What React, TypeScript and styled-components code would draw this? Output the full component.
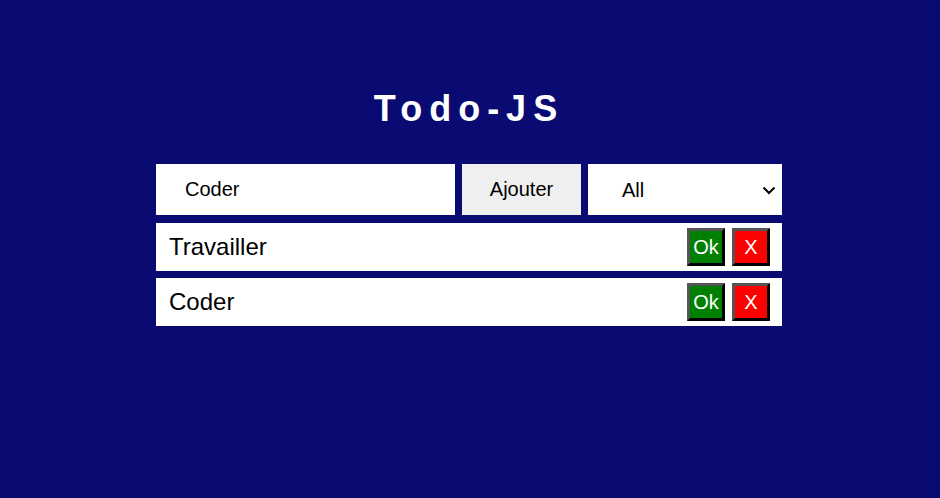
import React, { useState } from "react";
import styled, { createGlobalStyle } from "styled-components";

const GlobalStyle = createGlobalStyle`
  html, body {
    margin: 0;
    padding: 0;
    background: #0a0a73;
    font-family: "Liberation Sans", Arial, sans-serif;
  }
  * { box-sizing: border-box; }
`;

const Page = styled.div`
  min-height: 498px;
  padding: 88px 2px 0 0;
  display: flex;
  flex-direction: column;
  align-items: center;
`;

const Title = styled.h1`
  margin: 0 0 35px;
  font-size: 36px;
  line-height: 41px;
  font-weight: 700;
  color: #ffffff;
  letter-spacing: 7px;
  text-align: center;
`;

const Container = styled.div`
  width: 626px;
  display: flex;
  flex-direction: column;
  gap: 8px;
`;

const Form = styled.form`
  display: flex;
  gap: 7px;
  height: 51px;
`;

const TextInput = styled.input`
  width: 299px;
  height: 100%;
  border: none;
  outline: none;
  padding: 0 0 0 29px;
  font-family: inherit;
  font-size: 20px;
  color: #000;
  background: #fff;
`;

const AddButton = styled.button`
  width: 119px;
  height: 100%;
  border: none;
  background: #efefef;
  font-family: inherit;
  font-size: 20px;
  color: #000;
  padding: 0;
`;

const SelectWrap = styled.div`
  position: relative;
  width: 194px;
  height: 100%;
`;

const Filter = styled.select`
  appearance: none;
  -webkit-appearance: none;
  width: 100%;
  height: 100%;
  border: none;
  outline: none;
  border-radius: 0;
  background: #fff;
  font-family: inherit;
  font-size: 20px;
  color: #000;
  padding: 0 30px 0 34px;
`;

const Chevron = styled.svg`
  position: absolute;
  right: 6px;
  top: 50%;
  margin-top: -4px;
  width: 14px;
  height: 9px;
  pointer-events: none;
`;

const List = styled.ul`
  list-style: none;
  margin: 0;
  padding: 0;
  display: flex;
  flex-direction: column;
  gap: 7px;
`;

const Item = styled.li`
  height: 48px;
  background: #fff;
  display: flex;
  align-items: center;
  padding: 0 12px 0 13px;
  gap: 7px;
`;

const ItemText = styled.span`
  flex: 1;
  font-size: 24px;
  color: #000;
`;

const ActionButton = styled.button<{ $bg: string }>`
  width: 38px;
  height: 38px;
  padding: 0;
  background: ${(p) => p.$bg};
  color: #fff;
  font-family: inherit;
  font-size: 20px;
  border-style: solid;
  border-width: 3px;
  border-color: #555 #000 #000 #555;
  display: flex;
  align-items: center;
  justify-content: center;
`;

export default function App() {
  const [value, setValue] = useState("Coder");
  const todos = ["Travailler", "Coder"];
  return (
    <>
      <GlobalStyle />
      <Page>
        <Title>Todo-JS</Title>
        <Container>
          <Form onSubmit={(e) => e.preventDefault()}>
            <TextInput value={value} onChange={(e) => setValue(e.target.value)} />
            <AddButton type="submit">Ajouter</AddButton>
            <SelectWrap>
              <Filter defaultValue="all">
                <option value="all">All</option>
                <option value="done">Completed</option>
                <option value="todo">Uncompleted</option>
              </Filter>
              <Chevron viewBox="0 0 14 9">
                <path d="M1.5 1.5 L7 7 L12.5 1.5" fill="none" stroke="#000" strokeWidth="2" />
              </Chevron>
            </SelectWrap>
          </Form>
          <List>
            {todos.map((t, i) => (
              <Item key={i}>
                <ItemText>{t}</ItemText>
                <ActionButton $bg="#008000">Ok</ActionButton>
                <ActionButton $bg="#ff0000">X</ActionButton>
              </Item>
            ))}
          </List>
        </Container>
      </Page>
    </>
  );
}
